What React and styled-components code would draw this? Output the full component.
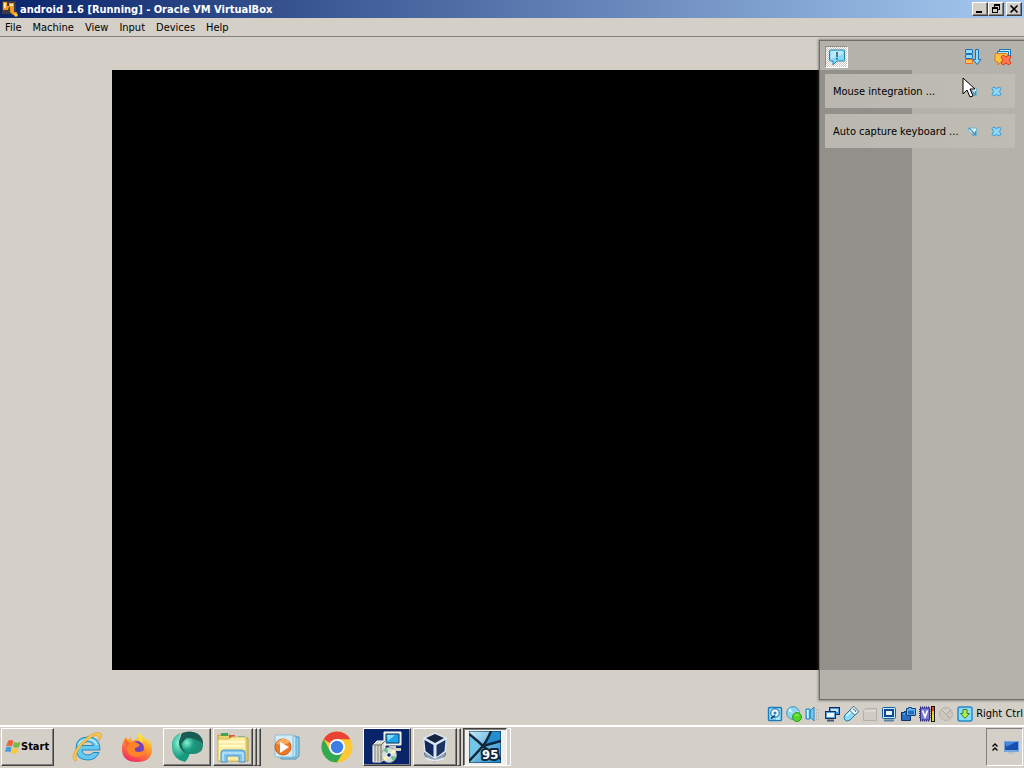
import React from "react"
import styled, { createGlobalStyle, css } from "styled-components"

const GlobalStyle = createGlobalStyle`
  * {
    box-sizing: border-box;
  }

  body {
    margin: 0;
    background: #d4d0c8;
    color: #000;
    font-family: Tahoma, "DejaVu Sans Condensed", "Liberation Sans", sans-serif;
    font-size: 11px;
    line-height: 14px;
  }

  button {
    padding: 0;
    border: 0;
    background: none;
    color: inherit;
    font: inherit;
  }

  svg {
    display: block;
    flex-shrink: 0;
  }
`

const raised = css`
  border: 1px solid;
  border-color: #fff #404040 #404040 #fff;
  box-shadow: inset -1px -1px 0 #808080;
`

const Desktop = styled.div`
  display: flex;
  flex-direction: column;
  min-height: 100vh;
`

const TitleBar = styled.header`
  display: flex;
  align-items: center;
  height: 18px;
  padding: 0 2px;
  gap: 2px;
  background: linear-gradient(to right, #0a246a, #a6caf0);
`

const Title = styled.h1`
  flex: 1;
  margin: 0;
  padding-top: 1px;
  color: #fff;
  font-size: 11px;
  line-height: 14px;
`

const WindowButton = styled.button`
  ${raised}
  display: flex;
  align-items: center;
  justify-content: center;
  width: 16px;
  height: 14px;
  margin-left: ${props => (props.$apart ? "0" : "-2px")};
  background: #d4d0c8;
`

const MenuBar = styled.nav`
  display: flex;
  align-items: center;
  height: 19px;
  padding: 2px 5px 0;
  gap: 11px;
  border-bottom: 1px solid #85827c;
`

const MenuItem = styled.button`
  line-height: 16px;
`

const Workspace = styled.main`
  position: relative;
  display: flex;
  flex: 1;
  padding: 33px 112px;
`

const GuestScreen = styled.div`
  flex: 1;
  background: #000;
`

const Center = styled.aside`
  position: absolute;
  top: 3px;
  right: 0;
  bottom: 3px;
  width: 205px;
  padding: 4px 9px 4px 5px;
  border: solid #706e69;
  border-width: 1px 0 1px 1px;
  background: rgba(174, 171, 165, 0.84);
  box-shadow: 0 0 2px 1px rgba(70, 68, 65, 0.5);
`

const CenterTools = styled.div`
  display: flex;
  align-items: center;
  height: 24px;
  margin-bottom: 5px;
  padding-right: 2px;
  gap: 10px;
`

const ToolButton = styled.button`
  display: flex;
  align-items: center;
  justify-content: center;
  width: 20px;
  height: 22px;
`

const ToggleButton = styled(ToolButton)`
  width: 23px;
  margin-right: auto;
  border: 1px solid;
  border-color: #918e88 #fff #fff #918e88;
  background: repeating-conic-gradient(#fff 0 25%, #ccc8c0 0 50%) 0 0 / 2px 2px;
`

const Notice = styled.div`
  display: flex;
  align-items: center;
  height: 34px;
  margin-bottom: 6px;
  padding: 0 12px 0 8px;
  gap: 12px;
  background: linear-gradient(to right, #bab8b0, #bfbcb4);
`

const NoticeText = styled.span`
  flex: 1;
  min-width: 0;
  padding-top: 2px;
  white-space: nowrap;
`

const NoticeButton = styled.button`
  width: 12px;
  height: 12px;
`

const Pointer = styled.svg`
  position: absolute;
  top: 40px;
  right: 48px;
`

const StatusBar = styled.footer`
  display: flex;
  align-items: center;
  justify-content: flex-end;
  height: 22px;
  padding-right: 1px;
  gap: 3px;
`

const TaskBar = styled.footer`
  display: flex;
  align-items: center;
  height: 43px;
  padding: 0 1px 2px;
  gap: 2px;
  border-top: 2px solid #fff;
`

const StartButton = styled.button`
  ${raised}
  display: flex;
  align-items: center;
  width: 53px;
  height: 38px;
  margin-right: 7px;
  padding: 0 3px;
  font-weight: bold;
`

const Task = styled.button`
  ${props => props.$open && raised}
  display: flex;
  align-items: center;
  justify-content: center;
  width: 48px;
  height: 38px;
  background: ${props => (props.$alert ? "#0a246a" : "none")};
`

const Stack = styled.div`
  display: flex;
  width: 48px;
  height: 38px;
`

const StackedTask = styled(Task)`
  ${props =>
    props.$active &&
    css`
      border: 1px solid;
      border-color: #404040 #fff #fff #404040;
      box-shadow: inset 1px 1px 0 #808080;
      background: #f1efec;
    `}
  flex: 1;
`

const StackEdge = styled.span`
  width: 4px;
  border: 1px solid;
  border-color: #fff ${props => (props.$light ? "#fff" : "#404040")}
    ${props => (props.$light ? "#fff" : "#404040")} transparent;
  box-shadow: inset -1px 0 0 ${props => (props.$light ? "#d4d0c8" : "#808080")};
`

const Tray = styled.div`
  display: flex;
  align-items: center;
  width: 37px;
  height: 38px;
  margin-left: auto;
  padding: 0 0 0 4px;
  gap: 5px;
  border: 1px solid;
  border-color: #808080 #fff #fff #808080;
`

const Icon = ({ size = 16, box = 16, children }) => (
  <svg width={size} height={size} viewBox={`0 0 ${box} ${box}`} aria-hidden="true">
    {children}
  </svg>
)

const MachineIcon = () => (
  <Icon>
    <path d="M0 0h14v13H0z" fill="#3c3a44" />
    <path d="M1 1h4v4h2V2h5v9h3l-1 3h-3l-3-3V6H7l-1 3H1z" fill="#f49a24" />
    <path d="M2 2h2v5H2zM8 3h3v2H8z" fill="#ffe6a2" />
    <circle cx="14" cy="14" r="1.8" fill="#ffc73e" />
  </Icon>
)

const BubbleIcon = () => (
  <Icon size={18} box={18}>
    <path
      d="M2.5 2h13q1 0 1 1v9q0 1-1 1H9l-4 4v-4H2.5q-1 0-1-1V3q0-1 1-1z"
      fill="#86d8f8"
      stroke="#2585b5"
    />
    <path d="M3 3h12v3L3 11z" fill="#b7ecff" />
    <path d="M9 4v5M9 10v1.5" stroke="#12293a" strokeWidth="1.2" />
  </Icon>
)

const SortIcon = () => (
  <Icon size={18} box={18}>
    <rect x="1.5" y="1.5" width="7" height="4" rx=".5" fill="#8fdcff" stroke="#1674b5" />
    <rect x="1.5" y="6.5" width="7" height="4" rx=".5" fill="#8fdcff" stroke="#1674b5" />
    <rect x="1.5" y="11.5" width="7" height="4" rx=".5" fill="#ffc45b" stroke="#e36a22" />
    <path d="M11.5 1.5h3v10h2.5l-4 5-4-5h2.5z" fill="#8fdcff" stroke="#1674b5" />
  </Icon>
)

const DeleteAllIcon = () => (
  <Icon size={18} box={18}>
    <path d="M5.5 5V1.5h11V9h-2" fill="#c6efff" stroke="#1674b5" />
    <path d="M3.5 7V3.5h11V10" fill="#b5e9ff" stroke="#1674b5" />
    <path d="M2.5 5.5h9q2 0 2 2V13q0 1-1 1H7l-3 3v-3H2.5q-1.5 0-1.5-1.5V7q0-1.5 1.5-1.5z" fill="#ffc240" stroke="#d7791e" />
    <path d="M7 9l2-2 3 2 3-2 2 2-2 3 2 3-2 2-3-2-3 2-2-2 2-3z" fill="#ff794d" stroke="#d83c21" />
  </Icon>
)

const OpenIcon = () => (
  <Icon size={11} box={11}>
    <path d="M1.5 2h8v7.5L7 7.5H5L1.5 5z" fill="#d9f0f5" stroke="#78b5cd" />
    <path d="M2 2l6 6M8.5 5v4H5" stroke="#4794b8" strokeWidth="1.2" fill="none" />
  </Icon>
)

const CloseIcon = () => (
  <Icon size={11} box={11}>
    <path
      d="M1 2.5L2.5 1l3 1.5 3-1.5L10 2.5 8.5 5.5l1.5 3L8.5 10l-3-1.5-3 1.5L1 8.5l1.5-3z"
      fill="#8bd7fa"
      stroke="#3799d1"
    />
  </Icon>
)

const DiskIcon = () => (
  <Icon>
    <rect x="1.5" y="1.5" width="13" height="13" rx="1" fill="#8bdaf9" stroke="#1f7cba" strokeWidth="1.4" />
    <circle cx="8" cy="7" r="4.2" fill="#eafaff" stroke="#1661a5" />
    <circle cx="8" cy="7" r="1.5" fill="#2487c5" />
    <path d="M4 12.5l4-3" stroke="#1b4d83" strokeWidth="1.8" />
    <path d="M9 13h4" stroke="#eafaff" />
  </Icon>
)

const OpticalIcon = () => (
  <Icon>
    <circle cx="7" cy="7" r="6.3" fill="#8ed6f2" stroke="#3b90b6" />
    <path d="M7 7L4 2 2 5zM7 7l6-2V8z" fill="#d3f5ff" />
    <circle cx="11" cy="11" r="4.5" fill="#54d628" stroke="#279c2a" />
    <path d="M8.5 10q2-3 5-.5z" fill="#9bef60" />
  </Icon>
)

const AudioIcon = () => (
  <Icon>
    <path d="M1 3h4v10H1zM5 5l4-4v14l-4-4z" fill="#6fc9f0" stroke="#2487c5" />
    <path d="M2 4h1.5v8H2z" fill="#eaffff" />
    <path d="M11 4h4M11 7h4M11 10h4M11 13h4" stroke="#aaa69f" strokeDasharray="1 1" />
  </Icon>
)

const NetworkIcon = () => (
  <Icon>
    <rect x="5.5" y="1.5" width="10" height="7" fill="#4f92d3" stroke="#152e65" />
    <path d="M7 3h7v3H7z" fill="#c0e8ff" />
    <rect x="1.5" y="5.5" width="10" height="7" fill="#5ba2dd" stroke="#152e65" />
    <path d="M3 7h7v4H3z" fill="#edf8ff" />
    <path d="M3 14.5h7" stroke="#465570" strokeWidth="2" />
  </Icon>
)

const UsbIcon = () => (
  <Icon>
    <path d="M8 3l5 5-6 6q-3 2-5 0t0-5z" fill="#8cdcff" stroke="#287ca5" />
    <path d="M9 1.5l2-1L15.5 5l-1 2-3 2L7 4.5z" fill="#e7f5fa" stroke="#436f87" />
    <path d="M3.5 10l4-4" stroke="#dff7ff" strokeWidth="1.5" />
    <path d="M10.5 3l1 1M12 4.5l1 1" stroke="#3c5b70" strokeWidth="1.2" />
  </Icon>
)

const FolderIcon = () => (
  <Icon>
    <path d="M1.5 4.5l3-2h10v12h-13z" fill="#d0cbc3" stroke="#b3aea7" />
    <path d="M2 5h12" stroke="#e7e4dd" />
  </Icon>
)

const DisplayIcon = () => (
  <Icon>
    <rect x="1.5" y="1.5" width="13" height="11" rx="1" fill="#c0edff" stroke="#1463a1" />
    <rect x="4" y="4" width="8" height="6" fill="#e2f8ff" stroke="#16458b" strokeWidth="2" />
    <path d="M3 14.5h10" stroke="#5b83a0" strokeWidth="2" />
  </Icon>
)

const RecordingIcon = () => (
  <Icon>
    <path d="M1.5 6.5h3v-1h3v1h3v8h-9z" fill="#276dc1" stroke="#102f67" />
    <path d="M6.5 2.5h2v-1h3v1h4v7h-9z" fill="#65baf5" stroke="#134585" />
    <path d="M8 4.5h6v4H8z" fill="#2b6dbd" />
    <path d="M3 8h2" stroke="#73c9f4" />
  </Icon>
)

const ProcessorIcon = () => (
  <Icon>
    <path d="M1 1.5h10M1 14.5h10" stroke="#2d2a7b" strokeWidth="2" strokeDasharray="1 1" />
    <path d="M1 3v10M10.5 3v10" stroke="#2d2a7b" strokeWidth="2" strokeDasharray="1 1" />
    <rect x="1.5" y="2" width="9" height="12" fill="#7776d0" stroke="#34348c" />
    <path d="M3.5 4.5L6 11l2.5-6.5" stroke="#fff" strokeWidth="1.7" fill="none" />
    <path d="M12 0h4v16h-4z" fill="#15130d" />
    <path d="M13 1h2v4h-2z" fill="#ee401d" />
    <path d="M13 5h2v4h-2z" fill="#ffbd16" />
    <path d="M13 9h2v6h-2z" fill="#dbe424" />
  </Icon>
)

const MouseIcon = () => (
  <Icon>
    <circle cx="8" cy="8" r="6.5" fill="#cbc6be" stroke="#b8b3ac" />
    <path d="M4 4l4 4 5-4M8 9l4 3" stroke="#aaa69f" fill="none" />
    <path d="M5 3l3 4 3-4" stroke="#e4e0d9" fill="none" />
  </Icon>
)

const HostKeyIcon = () => (
  <Icon>
    <rect x="1" y="1" width="14" height="14" rx="2" fill="#8adcff" stroke="#2489ca" strokeWidth="1.5" />
    <path d="M6 3.5h4v4h2.5L8 12.5 3.5 7.5H6z" fill="#b9e957" stroke="#37881e" />
  </Icon>
)

const WindowsLogo = () => (
  <Icon>
    <path d="M3 2q3-2 5.500 0L7 7.500Q4 6 1 7.500z" fill="#e9653e" />
    <path d="M9 3q3 1.500 6.500 0l-1.500 5q-3 1.500-6 0z" fill="#78b845" />
    <path d="M1 8.500q3-2 5.500 0l-1 5q-3-2-5.500 0z" fill="#4a9bda" />
    <path d="M7 9q3 1.500 6.500 0l-1.500 5q-3 1.500-6 0z" fill="#f7c938" />
  </Icon>
)

const ExplorerLogo = () => (
  <Icon size={32} box={32}>
    <path
      d="M29 19H11q.5 5 6 5 4 0 5-2.500h6Q25 29 17 29 5 29 5 17.500T17 6q12 0 12 13zM11 14.500h11.500q-1-4-5.500-4t-6 4z"
      fill="#65caf2"
      stroke="#2588bd"
      fillRule="evenodd"
    />
    <path d="M7.500 14Q10 8.500 17 8.500 24 8.500 26 14" fill="none" stroke="#b8eeff" strokeWidth="1.500" />
    <path d="M4 30Q-2 26 9 13 22-1 29 2q3 2-1 8 0-5-2-6-4 0-15 10Q2 25 6 29z" fill="#f7c84d" stroke="#dc9b25" strokeWidth=".6" />
  </Icon>
)

const FirefoxLogo = () => (
  <Icon size={32} box={32}>
    <defs>
      <linearGradient id="fox" x1=".8" y1="0" x2=".3" y2="1">
        <stop offset="0" stopColor="#fff04b" />
        <stop offset=".45" stopColor="#ff9828" />
        <stop offset="1" stopColor="#f42b66" />
      </linearGradient>
    </defs>
    <path d="M5 6l2 3 3-3 1 4 5-2 1-6q6 3 8 8l1-3q5 5 5 11 0 13-15 13T1 18Q1 11 5 6z" fill="url(#fox)" />
    <circle cx="16" cy="17" r="7" fill="#7542bd" />
    <path d="M8 12q5-3 8 0l3 2q-1 2-5 3-1 4 4 4 4 0 7-3-2 8-10 8Q5 25 6 15z" fill="#ff8329" />
    <path d="M17 2q6 5 4 10-4-3-4-10z" fill="#ffe541" />
    <path d="M4 8q-1 5 3 9l1-5z" fill="#ff6138" />
  </Icon>
)

const BrowserLogo = () => (
  <Icon size={32} box={32}>
    <defs>
      <radialGradient id="teal" cx=".35" cy=".35">
        <stop offset="0" stopColor="#8af1d2" />
        <stop offset="1" stopColor="#159c80" />
      </radialGradient>
    </defs>
    <path d="M1 15Q0 6 9 2q-3 7 4 11l6 8q-1 6-5 10Q1 28 1 15z" fill="url(#teal)" />
    <ellipse cx="20" cy="12" rx="12" ry="11" fill="#195d55" />
    <path d="M10 13q3-9 13-5 10 3 9 7-1 9-12 8-8 0-10-10z" fill="#238c77" />
    <circle cx="18" cy="14" r="7" fill="url(#teal)" />
    <path d="M11 2q9-4 17 2-11-2-17 8-3-6 0-10z" fill="#165e57" />
  </Icon>
)

const LibraryLogo = () => (
  <Icon size={34} box={34}>
    <path d="M2 5h12l2 3h16v23H2z" fill="#ead370" stroke="#ba9a3b" />
    <path d="M5 3h7v3H5z" fill="#39a85a" />
    <path d="M13 5h6v3h-6z" fill="#d85b43" />
    <path d="M22 6h7v3h-7z" fill="#52a4d2" />
    <path d="M2 9h11l3-2h14v24H2z" fill="#fbeea0" stroke="#d5bd60" />
    <path d="M3 12h26M3 16h26" stroke="#fff9cc" strokeWidth="2" />
    <path d="M5 32v-9q0-3 3-3h18q3 0 3 3v9h-6v-6H11v6z" fill="#7fc4f0" stroke="#5298c4" />
    <path d="M7 31v-8h20v8" stroke="#dcf5ff" fill="none" />
  </Icon>
)

const MediaLogo = () => (
  <Icon size={28} box={28}>
    <path d="M8 4h18v19l-3 3H8z" fill="#8dcded" stroke="#4d91b6" />
    <path d="M5 3h18v21H5z" fill="#b8e5f8" stroke="#6ba8c9" />
    <path d="M2 2h18v22H2z" fill="#d1edf7" stroke="#91bfd2" />
    <circle cx="10" cy="14" r="8" fill="#ee7924" stroke="#d95d18" />
    <path d="M3 11q5-8 14-3-3 5-14 3z" fill="#ffad61" />
    <path d="M7 9l9 5-9 6z" fill="#fff" />
  </Icon>
)

const ChromeLogo = () => (
  <Icon size={32} box={32}>
    <circle cx="16" cy="16" r="15.5" fill="#fcc934" />
    <path d="M16 16L2.6 8.2A15.5 15.5 0 0 1 29.4 8.2H16z" fill="#e94335" />
    <path d="M2.6 8.2A15.5 15.5 0 0 0 16 31.5l6.8-11.6L16 16 9.2 19.9z" fill="#34a853" />
    <circle cx="16" cy="16" r="8" fill="#fff" />
    <circle cx="16" cy="16" r="6.2" fill="#3c7de6" />
  </Icon>
)

const InstallerLogo = () => (
  <Icon size={32} box={32}>
    <path d="M13 1h17v13H13z" fill="#e1ded2" stroke="#fff" />
    <path d="M15 3h13v9H15z" fill="#1aa4ee" stroke="#173863" />
    <path d="M16 4h8l-7 6z" fill="#83dcff" />
    <path d="M18 15h7v2h5v3H14v-3h4z" fill="#d4d0c8" />
    <path d="M2 14l4-4h8v18l-4 3H2z" fill="#d9d8cf" stroke="#fff" />
    <path d="M2 14h8v17M10 14l4-4" stroke="#62645f" fill="none" />
    <path d="M4 14v17M7 14v17" stroke="#85847a" />
    <circle cx="18" cy="24" r="7.500" fill="#d4e1dc" stroke="#929f99" />
    <path d="M18 24l-6-5 4-2zM18 24l7 2-3 4z" fill="#6fbf8a" />
    <path d="M18 24l5-6 2 3zM18 24l-7 3 4 3z" fill="#fff6b6" />
    <circle cx="18" cy="24" r="2.300" fill="#0a246a" stroke="#fff" />
  </Icon>
)

const BoxLogo = () => (
  <Icon size={32} box={32}>
    <path d="M6 20q-2 4 2 7 8 6 16 0 4-3 2-7" fill="#8da0b5" stroke="#5f7186" />
    <path d="M16 1l12 6-1 14-11 7-11-7L4 7z" fill="#d9e6f3" />
    <path d="M7 7l9-4 9 4-9 5z" fill="#16243e" />
    <path d="M5.500 9l9 5v12l-8-6z" fill="#12275a" />
    <path d="M26.500 9l-9 5v12l8-6z" fill="#1d3460" />
    <path d="M7 27q9 5 18 0" stroke="#e5edf4" strokeWidth="1.500" fill="none" />
  </Icon>
)

const Player95Logo = () => (
  <Icon size={32} box={32}>
    <defs>
      <linearGradient id="sky" x2="1" y2="1">
        <stop stopColor="#c4edf9" />
        <stop offset="1" stopColor="#1886cb" />
      </linearGradient>
    </defs>
    <path d="M0 0h32v32H0z" fill="url(#sky)" />
    <path d="M0 5l15 10L3 32H0z" fill="#74c6e9" />
    <path d="M23 0h9v11l-17 4z" fill="#258fcd" />
    <path d="M0 3q9 7 15 13 8 6 17 12M22 0q-4 10-9 16T0 30M14 15l18-5" stroke="#10273d" strokeWidth="2.500" fill="none" />
    <path d="M0 0h32v32H0z" fill="none" stroke="#10273d" />
    <text
      x="13"
      y="28"
      fill="#fff"
      stroke="#10273d"
      strokeWidth="4"
      strokeLinejoin="round"
      paintOrder="stroke"
      fontFamily="DejaVu Sans Condensed"
      fontWeight="bold"
      fontSize="13"
    >
      95
    </text>
  </Icon>
)

const MonitorIcon = () => (
  <Icon>
    <path d="M0 2h15v11H0z" fill="#78a5dc" />
    <path d="M1 3h13v8H1z" fill="#174fae" />
    <path d="M1 3h11L2 8z" fill="#4785dc" />
    <path d="M4 14h7" stroke="#a3b4c5" />
  </Icon>
)

const menus = ["File", "Machine", "View", "Input", "Devices", "Help"]

const notices = ["Mouse integration ...", "Auto capture keyboard ..."]

const App = () => (
  <Desktop>
    <GlobalStyle />
    <TitleBar>
      <MachineIcon />
      <Title>android 1.6 [Running] - Oracle VM VirtualBox</Title>
      <WindowButton aria-label="Minimize">
        <Icon size={10} box={10}>
          <path d="M1 7h6v2H1z" />
        </Icon>
      </WindowButton>
      <WindowButton aria-label="Restore">
        <Icon size={10} box={10}>
          <path d="M3 0h6v6H7V5h1V2H4v1H3zM1 3h6v6H1zm1 2v3h4V5z" fillRule="evenodd" />
        </Icon>
      </WindowButton>
      <WindowButton $apart aria-label="Close">
        <Icon size={10} box={10}>
          <path d="M1.5 1.5l7 7M8.5 1.5l-7 7" stroke="#000" strokeWidth="1.7" />
        </Icon>
      </WindowButton>
    </TitleBar>
    <MenuBar>
      {menus.map(name => (
        <MenuItem key={name}>{name}</MenuItem>
      ))}
    </MenuBar>
    <Workspace>
      <GuestScreen />
      <Center>
        <CenterTools>
          <ToggleButton aria-label="Keep open">
            <BubbleIcon />
          </ToggleButton>
          <ToolButton aria-label="Toggle order">
            <SortIcon />
          </ToolButton>
          <ToolButton aria-label="Delete finished">
            <DeleteAllIcon />
          </ToolButton>
        </CenterTools>
        {notices.map(text => (
          <Notice key={text}>
            <NoticeText>{text}</NoticeText>
            <NoticeButton aria-label="Help">
              <OpenIcon />
            </NoticeButton>
            <NoticeButton aria-label="Close">
              <CloseIcon />
            </NoticeButton>
          </Notice>
        ))}
      </Center>
      <Pointer width="14" height="22" viewBox="0 0 14 22" aria-hidden="true">
        <path d="M1 1v16l4-4 3 7 3-1-3-7h5z" fill="#fff" stroke="#000" />
      </Pointer>
    </Workspace>
    <StatusBar>
      <DiskIcon />
      <OpticalIcon />
      <AudioIcon />
      <NetworkIcon />
      <UsbIcon />
      <FolderIcon />
      <DisplayIcon />
      <RecordingIcon />
      <ProcessorIcon />
      <MouseIcon />
      <HostKeyIcon />
      <span>Right Ctrl</span>
    </StatusBar>
    <TaskBar>
      <StartButton>
        <WindowsLogo />
        Start
      </StartButton>
      <Task aria-label="Internet Explorer">
        <ExplorerLogo />
      </Task>
      <Task aria-label="Firefox">
        <FirefoxLogo />
      </Task>
      <Task $open aria-label="Browser">
        <BrowserLogo />
      </Task>
      <Stack>
        <StackedTask $open aria-label="Libraries">
          <LibraryLogo />
        </StackedTask>
        <StackEdge />
        <StackEdge />
      </Stack>
      <Task aria-label="Media Player">
        <MediaLogo />
      </Task>
      <Task aria-label="Chrome">
        <ChromeLogo />
      </Task>
      <Task $open $alert aria-label="Setup">
        <InstallerLogo />
      </Task>
      <Stack>
        <StackedTask $open aria-label="VirtualBox">
          <BoxLogo />
        </StackedTask>
        <StackEdge />
      </Stack>
      <Stack>
        <StackedTask $active aria-label="Virtual machine">
          <Player95Logo />
        </StackedTask>
        <StackEdge $light />
      </Stack>
      <Tray>
        <button aria-label="Show hidden icons">
          <Icon size={8} box={8}>
            <path d="M1.5 3.5L4 1l2.5 2.5M1.5 7.5L4 5l2.5 2.5" stroke="#000" strokeWidth="1.3" fill="none" />
          </Icon>
        </button>
        <MonitorIcon />
      </Tray>
    </TaskBar>
  </Desktop>
)

export default App
